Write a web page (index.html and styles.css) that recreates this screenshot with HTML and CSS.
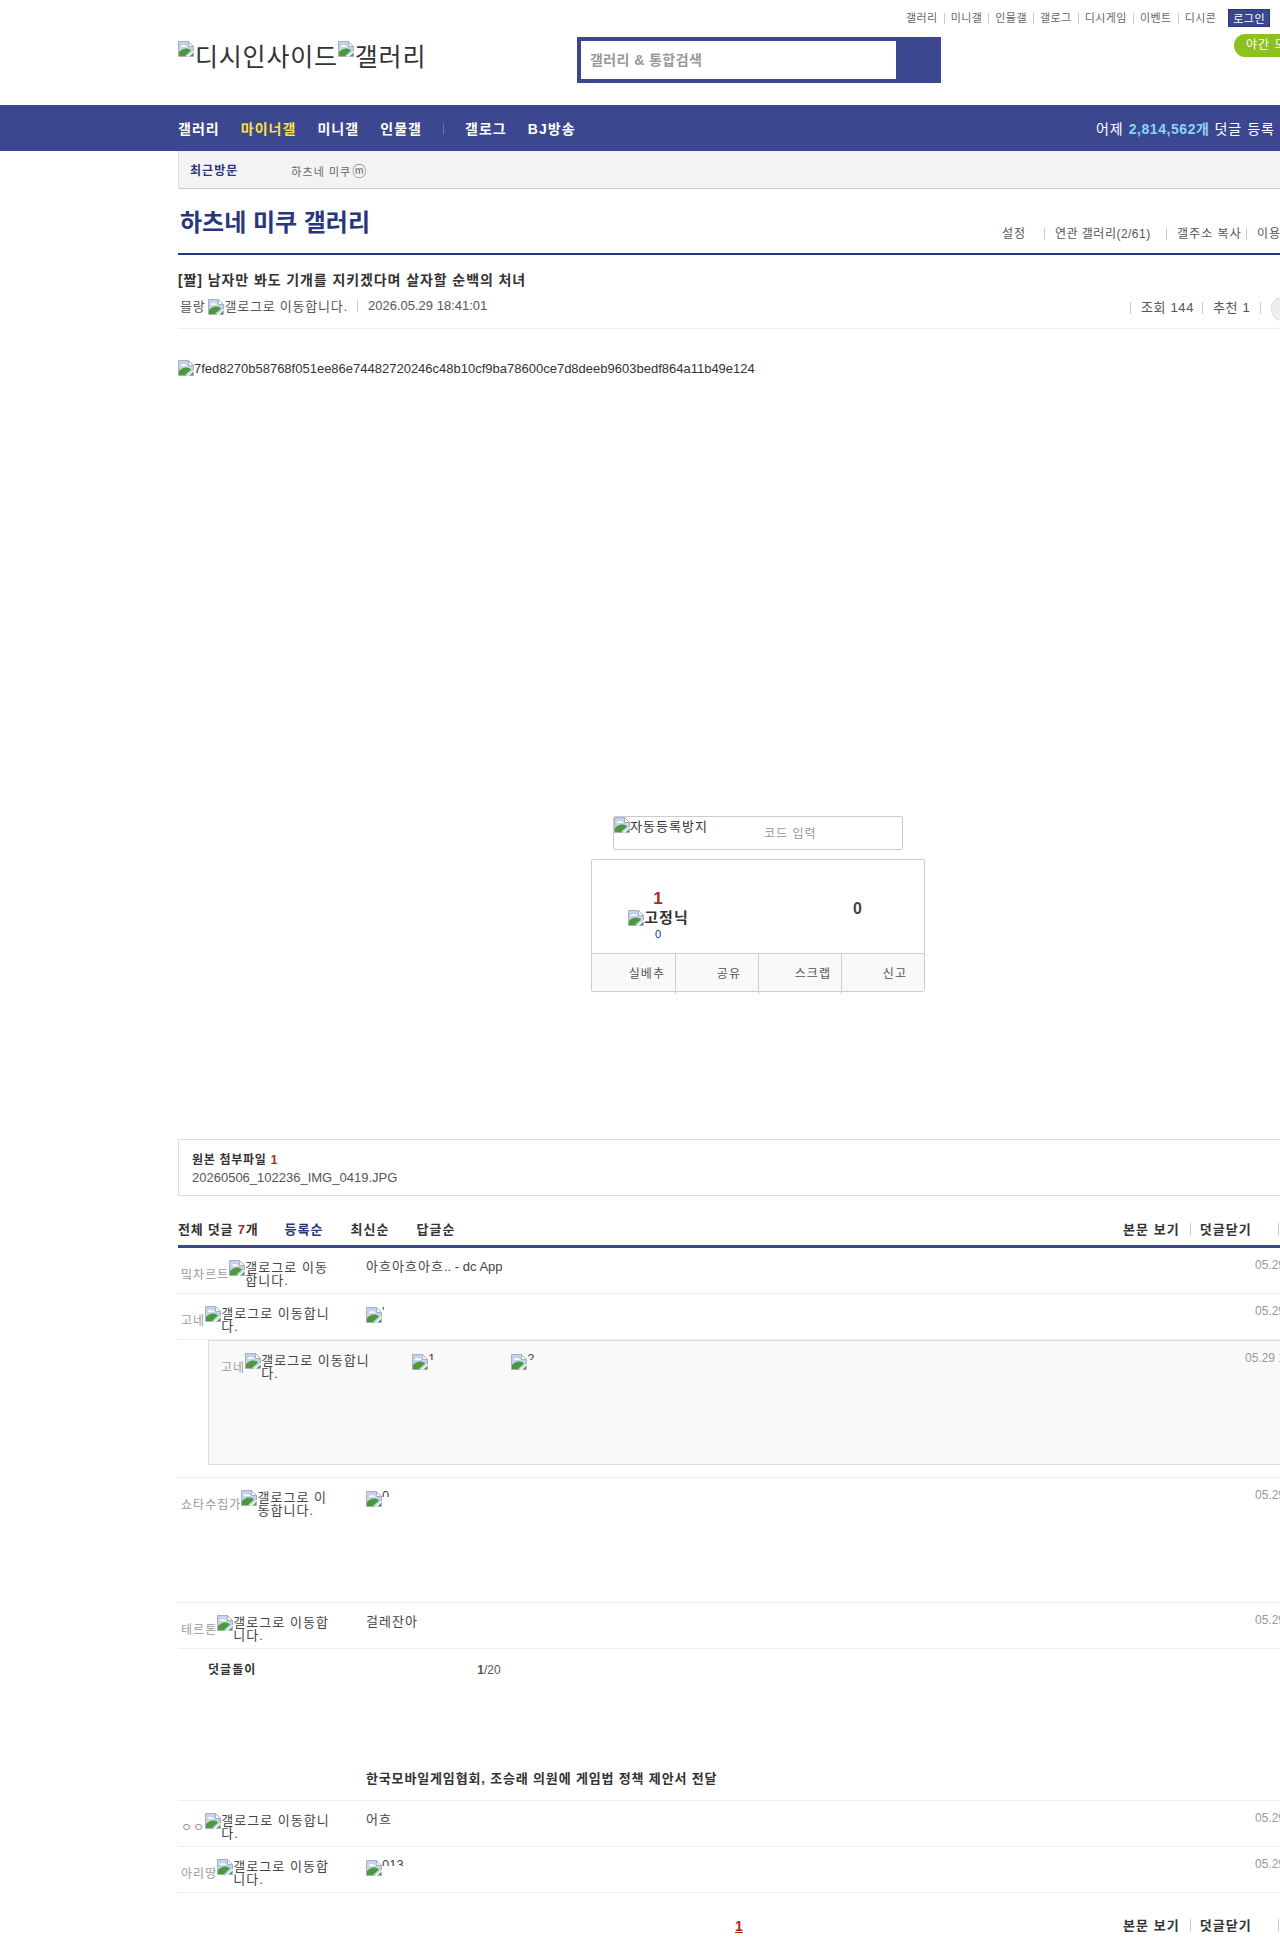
FILE: index.html
```html
<!doctype html>
<html>
<head>
<meta charset="utf-8">
<title>하츠네 미쿠 갤러리</title>
<link rel="stylesheet" href="styles.css">
</head>
<body>
<svg class="defs" width="0" height="0">
	<symbol id="broken" viewBox="0 0 16 16">
		<path d="M.5.5h10l5 5v10H.5z" fill="#c3d3ef" stroke="#a9b0bb"/>
		<path d="M2.500 6c.8-1.800 2.800-2.500 4-1.500 1.500-.2 2.800.4 3 1.500z" fill="#fff"/>
		<path d="M1 15v-4c2.500-2.500 5-4 8-3.500 1.500.3 3 1 4 2L7 15z" fill="#4b9a37"/>
		<path d="M15 12l-3 3h3z" fill="#4b9a37"/>
		<path d="M10.500.5v5h5L10.500.5z" fill="#fff" stroke="#a9b0bb"/>
		<path d="M8.500 16l7.500-6.200v1.200L10.500 16z" fill="#fff"/>
	</symbol>
</svg>

<div class="hd">
	<ul class="hd-links">
		<li>갤러리</li><li>미니갤</li><li>인물갤</li><li>갤로그</li><li>디시게임</li><li>이벤트</li><li>디시콘</li>
		<li class="login">로그인</li>
	</ul>
	<div class="hd-main">
		<div class="logo">
			<svg class="ico"><use href="#broken"/></svg>디시인사이드<svg class="ico"><use href="#broken"/></svg>갤러리
		</div>
		<div class="search">
			<div class="search-in">갤러리 &amp; 통합검색</div>
		</div>
		<div class="night">야간 모드</div>
	</div>
</div>

<div class="nav">
	<ul class="nav-in">
		<li>갤러리</li>
		<li class="on">마이너갤</li>
		<li>미니갤</li>
		<li>인물갤</li>
		<li class="sep"></li>
		<li>갤로그</li>
		<li>BJ방송</li>
		<li class="count">어제 <b>2,814,562개</b> 덧글 등록</li>
	</ul>
</div>

<div class="recent">
	<strong>최근방문</strong>
	<span>하츠네 미쿠 <i class="m">ⓜ</i></span>
</div>

<div class="page">
	<div class="gall-head">
		<h2>하츠네 미쿠 갤러리</h2>
		<ul class="gall-tools">
			<li class="t1">설정</li>
			<li class="t2">연관 갤러리(2/61)</li>
			<li class="t3">갤주소 복사</li>
			<li class="t4">이용 안내</li>
		</ul>
	</div>

	<div class="view-head">
		<h3>[짤] 남자만 봐도 기개를 지키겠다며 살자할 순백의 처녀</h3>
		<div class="view-meta">
			<div class="writer">믈랑<svg class="ico"><use href="#broken"/></svg>갤로그로 이동합니다.</div>
			<div class="date lat">2026.05.29 18:41:01</div>
			<ul class="stats">
				<li class="s1">조회 144</li>
				<li class="s2">추천 1</li>
				<li class="round"></li>
			</ul>
		</div>
	</div>

	<div class="view-body">
		<div class="pic-alt lat"><svg class="ico"><use href="#broken"/></svg>7fed8270b58768f051ee86e74482720246c48b10cf9ba78600ce7d8deeb9603bedf864a11b49e124</div>
		<div class="captcha">
			<span class="cap-img"><svg class="ico"><use href="#broken"/></svg>자동등록방지</span>
			<span class="cap-input">코드 입력</span>
		</div>
		<div class="rec">
			<div class="rec-top">
				<div class="rec-up">
					<b class="up-num">1</b>
					<b class="fix"><svg class="ico"><use href="#broken"/></svg>고정닉</b>
					<span class="fix-num">0</span>
				</div>
				<b class="rec-down">0</b>
			</div>
			<ul class="rec-btns">
				<li>실베추</li><li>공유</li><li>스크랩</li><li>신고</li>
			</ul>
		</div>
	</div>

	<div class="attach">
		<b>원본 첨부파일 <em>1</em></b>
		<p class="lat">20260506_102236_IMG_0419.JPG</p>
	</div>

	<div class="cmt-head">
		<b class="total">전체 덧글 <em>7</em>개</b>
		<b class="sort on">등록순</b>
		<b class="sort">최신순</b>
		<b class="sort">답글순</b>
		<ul class="cmt-tools">
			<li>본문 보기</li><li class="close">덧글닫기</li><li></li>
		</ul>
	</div>

	<ul class="cmts">
		<li class="cmt">
			<div class="nick"><span class="nm">밐차르트</span><span class="alt"><svg class="ico"><use href="#broken"/></svg><span>갤로그로 이동합니다.</span></span></div>
			<div class="txt">아흐아흐아흐<span class="lat">.. - dc App</span></div>
			<div class="when lat">05.29 18:52:12</div>
		</li>
		<li class="cmt">
			<div class="nick"><span class="nm">고네</span><span class="alt"><svg class="ico"><use href="#broken"/></svg><span>갤로그로 이동합니다.</span></span></div>
			<div class="txt"><span class="dccon"><svg class="ico"><use href="#broken"/></svg><i>'</i></span></div>
			<div class="when lat">05.29 18:55:40</div>
		</li>
		<li class="reply-wrap">
			<div class="reply">
				<div class="nick"><span class="nm">고네</span><span class="alt"><svg class="ico"><use href="#broken"/></svg><span>갤로그로 이동합니다.</span></span></div>
				<div class="txt two">
					<span class="dccon"><svg class="ico"><use href="#broken"/></svg><i>1</i></span>
					<span class="dccon"><svg class="ico"><use href="#broken"/></svg><i>2</i></span>
				</div>
				<div class="when lat">05.29 19:01:03</div>
			</div>
		</li>
		<li class="cmt tall">
			<div class="nick"><span class="nm">쇼타수집가</span><span class="alt"><svg class="ico"><use href="#broken"/></svg><span>갤로그로 이동합니다.</span></span></div>
			<div class="txt"><span class="dccon"><svg class="ico"><use href="#broken"/></svg><i>0</i></span></div>
			<div class="when lat">05.29 19:10:27</div>
		</li>
		<li class="cmt">
			<div class="nick"><span class="nm">테르톤</span><span class="alt"><svg class="ico"><use href="#broken"/></svg><span>갤로그로 이동합니다.</span></span></div>
			<div class="txt">걸레잔아</div>
			<div class="when lat">05.29 19:22:51</div>
		</li>
		<li class="bot">
			<div class="bot-row"><b>덧글돌이</b><span class="lat"><b>1</b>/20</span></div>
			<p>한국모바일게임협회, 조승래 의원에 게임법 정책 제안서 전달</p>
		</li>
		<li class="cmt">
			<div class="nick"><span class="nm">ㅇㅇ</span><span class="alt"><svg class="ico"><use href="#broken"/></svg><span>갤로그로 이동합니다.</span></span></div>
			<div class="txt">어흐</div>
			<div class="when lat">05.29 19:34:18</div>
		</li>
		<li class="cmt">
			<div class="nick"><span class="nm">아리땅</span><span class="alt"><svg class="ico"><use href="#broken"/></svg><span>갤로그로 이동합니다.</span></span></div>
			<div class="txt"><span class="dccon"><svg class="ico"><use href="#broken"/></svg><i>013</i></span></div>
			<div class="when lat">05.29 19:40:09</div>
		</li>
	</ul>

	<div class="cmt-foot">
		<a class="pg">1</a>
		<ul class="cmt-tools">
			<li>본문 보기</li><li class="close">덧글닫기</li><li></li>
		</ul>
	</div>
</div>
</body>
</html>
```

FILE: styles.css
```css
*{ margin:0; padding:0; list-style:none; box-sizing:border-box; }
html,body{ width:1280px; height:1957px; overflow:hidden; background:#fff; }
body{ font-family:"Liberation Sans","Noto Sans CJK KR",sans-serif; font-size:13px; color:#333; letter-spacing:.08em; }
em{ font-style:normal; color:#b3261e; }
.lat{ letter-spacing:0; }
.defs{ position:absolute; }
.ico{ width:16px; height:16px; flex:none; }

/* header */
.hd{ height:105px; padding:9px 0 0 178px; }
.hd-links{ width:1092px; height:18px; display:flex; justify-content:flex-end; align-items:center; font-size:11px; color:#666; letter-spacing:.04em; }
.hd-links li{ padding:0 6px; line-height:11px; border-left:1px solid #ccc; }
.hd-links li:first-child{ border-left:0; }
.hd-links .login{ margin-left:6px; padding:0 4px; height:18px; line-height:19px; background:#3b4890; color:#fff; border:1px solid #29367c; }
.hd-main{ display:flex; margin-top:10px; }
.logo{ flex:none; width:399px; height:36px; padding-top:4px; font-size:25px; line-height:30px; letter-spacing:.8px; color:#333; white-space:nowrap; }
.logo .ico{ vertical-align:9px; margin-right:1px; }
.search{ flex:none; width:364px; height:46px; background:#3b4890; padding:4px 45px 4px 4px; }
.search-in{ height:38px; background:#fff; padding-left:9px; line-height:38px; font-size:14px; font-weight:bold; letter-spacing:.03em; color:#999; }
.night{ flex:none; margin:-3px 0 0 293px; width:90px; height:23px; line-height:23px; padding-left:12px; border-radius:12px; background:#8cc11f; color:#fff; font-size:12px; white-space:nowrap; }

/* nav */
.nav{ height:46px; background:#3b4890; padding-left:178px; }
.nav-in{ width:1097px; height:46px; display:flex; align-items:center; font-size:14px; font-weight:bold; color:#fff; gap:21px; }
.nav-in .on{ color:#ffe13f; }
.nav-in .sep{ width:1px; height:11px; background:#6a75ad; }
.nav-in .count{ margin-left:auto; font-weight:normal; }
.nav-in .count b{ color:#8dd4f4; letter-spacing:.04em; }

.recent{ margin-left:178px; height:38px; background:#f3f3f3; border-left:1px solid #ddd; border-bottom:1px solid #ccc; display:flex; align-items:center; padding-left:11px; gap:53px; font-size:12px; }
.recent strong{ color:#29367c; }
.recent span{ font-size:11px; color:#666; }
.recent .m{ font-style:normal; font-size:14px; letter-spacing:0; margin-left:-3px; }

/* body */
.page{ margin-left:178px; width:1160px; }
.gall-head{ height:66px; border-bottom:2px solid #29367c; display:flex; }
.gall-head h2{ padding:17px 0 0 2px; font-size:24px; line-height:33px; letter-spacing:0; color:#29367c; }
.gall-tools{ margin-left:auto; width:336px; display:flex; align-items:flex-start; padding-top:39px; font-size:12px; line-height:12px; color:#555; }
.gall-tools li{ flex:none; white-space:nowrap; padding-left:10px; }
.gall-tools .t1{ width:42px; padding-left:0; }
.gall-tools .t2{ width:122px; border-left:1px solid #ccc; letter-spacing:.04em; }
.gall-tools .t3{ width:80px; border-left:1px solid #ccc; }
.gall-tools .t4{ border-left:1px solid #ccc; }

.view-head{ height:74px; border-bottom:1px solid #eee; }
.view-head h3{ padding-top:15px; font-size:14px; line-height:20px; letter-spacing:.065em; color:#333; }
.view-meta{ display:flex; align-items:center; margin-top:5px; height:20px; font-size:13px; color:#555; }
.writer{ padding-left:2px; width:179px; white-space:nowrap; letter-spacing:.06em; }
.writer .ico{ vertical-align:-4px; margin-left:3px; }
.date{ padding-left:10px; border-left:1px solid #ccc; line-height:13px; }
.stats{ margin-left:auto; width:208px; display:flex; margin-top:6px; letter-spacing:.05em; }
.stats li{ flex:none; padding-left:10px; height:12px; line-height:12px; border-left:1px solid #ccc; white-space:nowrap; }
.stats .s1{ width:72px; }
.stats .s2{ width:58px; }
.stats .round{ padding:0; }
.stats .round:after{ content:""; display:block; width:30px; height:22px; margin:-5px 0 0 10px; border-radius:11px; background:#eee; border:1px solid #ddd; }

.view-body{ height:810px; padding-top:31px; }
.pic-alt{ font-size:13px; line-height:16px; color:#333; white-space:nowrap; }
.pic-alt .ico{ vertical-align:-3px; }
.captcha{ margin:439px 0 0 435px; width:290px; height:34px; border:1px solid #ccc; border-radius:2px; display:flex; }
.cap-img{ width:150px; font-size:13px; line-height:19px; color:#333; }
.cap-img .ico{ vertical-align:-2px; }
.cap-input{ font-size:12px; line-height:35px; color:#999; }
.rec{ margin:9px 0 0 413px; width:334px; height:133px; border:1px solid #ccc; border-radius:2px; }
.rec-top{ height:94px; display:flex; border-bottom:1px solid #ccc; }
.rec-up{ width:133px; padding-top:30px; display:flex; flex-direction:column; align-items:center; }
.up-num{ font-size:17px; line-height:18px; color:#b3261e; }
.fix{ display:block; font-size:15px; line-height:19px; color:#333; white-space:nowrap; }
.fix .ico{ vertical-align:-3px; }
.fix-num{ font-size:11px; line-height:14px; color:#29367c; }
.rec-down{ margin-left:116px; width:34px; text-align:center; padding-top:40px; font-size:16px; line-height:18px; color:#444; }
.rec-btns{ display:grid; grid-template-columns:repeat(4,1fr); height:37px; background:#f9f9f9; font-size:12px; color:#555; }
.rec-btns li{ text-align:right; line-height:40px; padding-right:10px; border-left:1px solid #ccc; }
.rec-btns li:first-child{ border-left:0; }
.rec-btns li:nth-child(even){ padding-right:17px; }

.attach{ height:57px; border:1px solid #ddd; padding:11px 0 0 13px; font-size:12px; line-height:18px; letter-spacing:.06em; }
.attach p{ font-size:13px; color:#555; letter-spacing:0; }

.cmt-head{ height:52px; padding-top:24px; display:flex; border-bottom:3px solid #3b4890; font-size:13px; line-height:20px; color:#333; }
.cmt-head .total{ letter-spacing:.06em; }
.cmt-head .sort{ margin-left:26px; }
.cmt-head .sort + .sort{ margin-left:27px; }
.cmt-head .sort.on{ color:#29367c; }
.cmt-tools{ flex:none; margin-left:auto; width:225px; display:flex; font-size:13px; font-weight:bold; color:#333; }
.cmt-tools li{ padding:0 10px; line-height:20px; white-space:nowrap; position:relative; }
.cmt-tools .close{ padding-right:26px; }
.cmt-tools li + li:before{ content:""; position:absolute; left:0; top:3px; width:1px; height:12px; background:#ccc; }

.cmt{ height:46px; display:flex; border-bottom:1px solid #eee; }
.cmt.tall{ height:125px; }
.nick{ flex:none; width:188px; display:flex; padding:11px 35px 0 3px; }
.nm{ font-size:12px; line-height:14px; margin-top:9px; color:#999; white-space:nowrap; }
.alt{ flex:1; display:flex; font-size:13px; line-height:13px; color:#444; word-break:break-all; }
.alt .ico{ margin-top:1px; }
.alt span{ padding-top:2px; }
.txt{ flex:none; width:889px; padding-top:11px; font-size:13px; line-height:16px; color:#444; }
.when{ white-space:nowrap; padding-top:10px; font-size:12px; line-height:14px; color:#999; }
.dccon{ display:flex; height:16px; margin-top:2px; overflow:hidden; }
.dccon i{ font-style:normal; font-size:13px; line-height:9px; height:6px; overflow:hidden; letter-spacing:0; }

.reply-wrap{ height:138px; border-bottom:1px solid #eee; padding-left:30px; }
.reply{ height:125px; background:#f9f9f9; border:1px solid #ddd; display:flex; }
.reply .nick{ width:203px; padding:11px 35px 0 12px; }
.reply .txt{ width:833px; }
.two{ display:flex; gap:76px; }

.bot{ height:152px; border-bottom:1px solid #eee; font-size:12px; }
.bot-row{ display:flex; padding:13px 0 0 30px; line-height:16px; color:#333; }
.bot-row span{ margin-left:221px; color:#555; }
.bot p{ margin:91px 0 0 188px; font-size:13px; line-height:20px; font-weight:bold; letter-spacing:.065em; color:#333; }

.cmt-foot{ padding-top:23px; display:flex; }
.pg{ margin-left:557px; font-size:14px; line-height:20px; font-weight:bold; color:#b3261e; text-decoration:underline; letter-spacing:0; }
```
